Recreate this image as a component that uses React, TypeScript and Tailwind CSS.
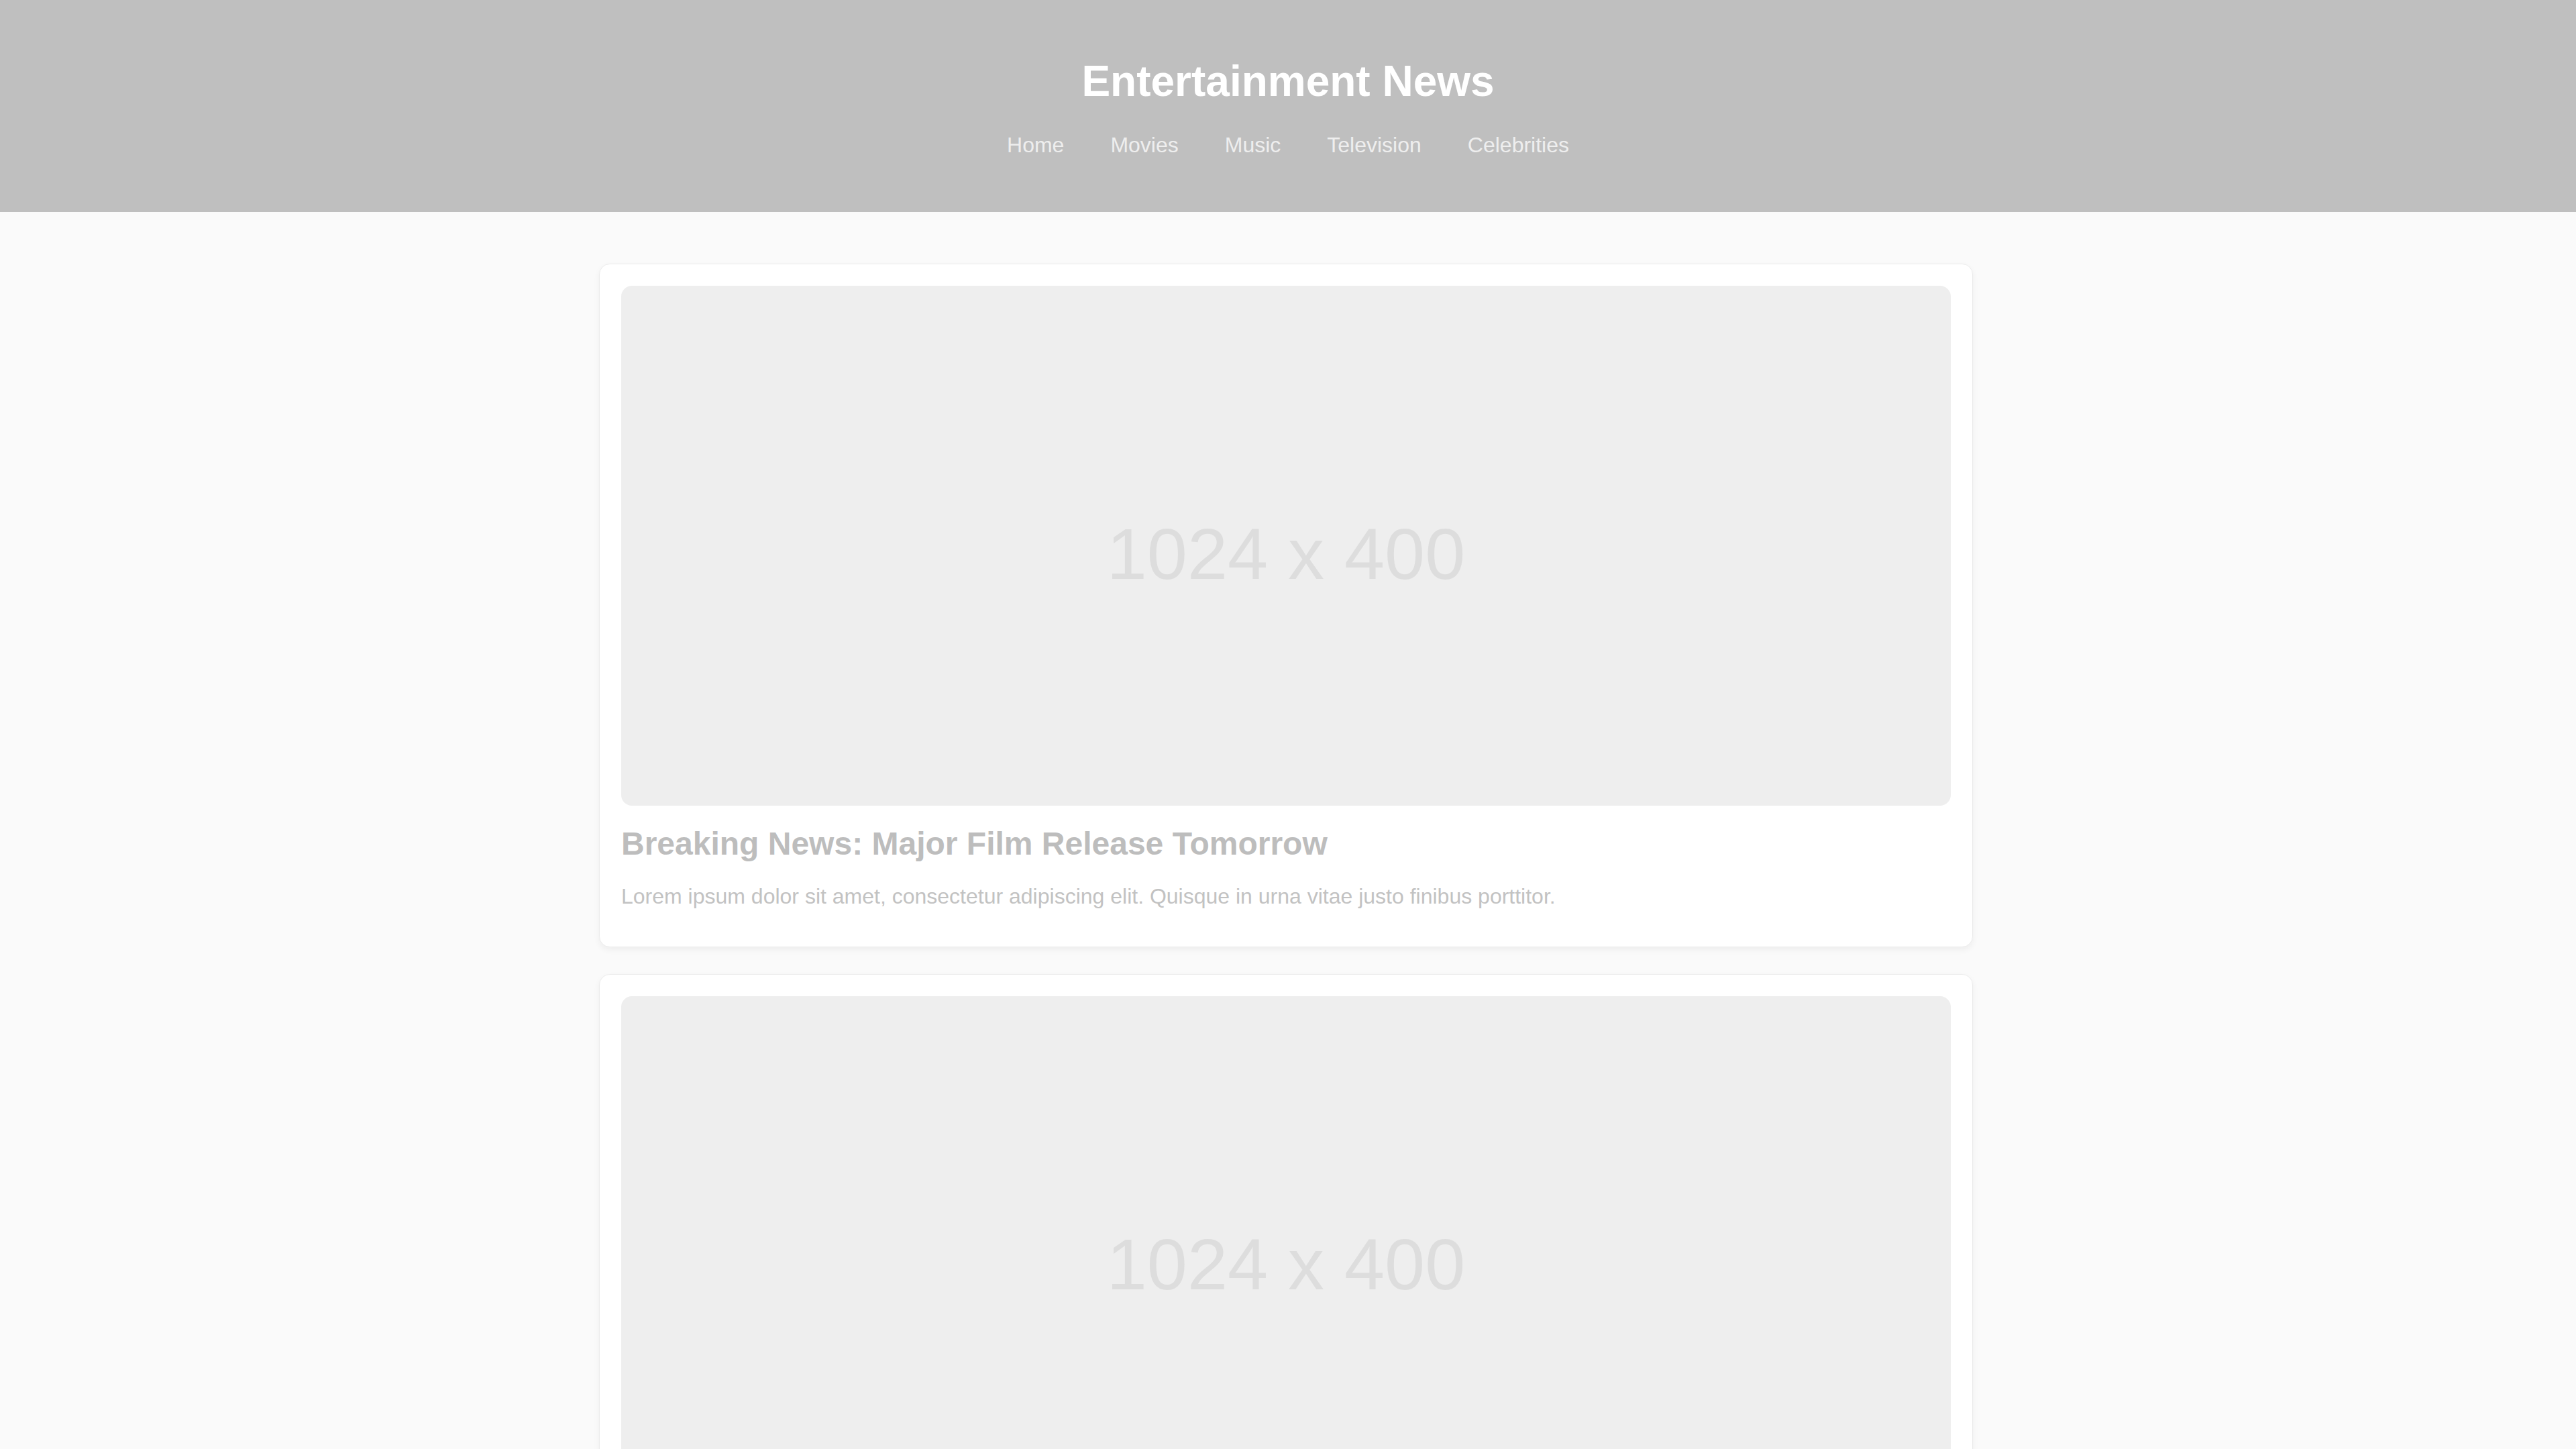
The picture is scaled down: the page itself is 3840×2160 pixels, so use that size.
import React from "react";

const navItems = ["Home", "Movies", "Music", "Television", "Celebrities"];

const articles = [
  {
    title: "Breaking News: Major Film Release Tomorrow",
    body: "Lorem ipsum dolor sit amet, consectetur adipiscing elit. Quisque in urna vitae justo finibus porttitor.",
  },
  {
    title: "Chart-Topping Album Announced",
    body: "Lorem ipsum dolor sit amet, consectetur adipiscing elit. Quisque in urna vitae justo finibus porttitor.",
  },
];

function Placeholder() {
  return (
    <div className="flex h-[775px] w-full items-center justify-center rounded-[16px] bg-[#eeeeee]">
      <span className="pt-[24px] text-[108px] leading-none text-[#dddddd]">1024 x 400</span>
    </div>
  );
}

export default function App() {
  return (
    <div
      className="min-h-screen w-full bg-[#fafafa]"
      style={{ fontFamily: '"Liberation Sans", Arial, sans-serif' }}
    >
      <header className="flex h-[316px] w-full flex-col items-center bg-[#bfbfbf] pt-[89px]">
        <h1 className="text-[64px] font-bold leading-none text-white">Entertainment News</h1>
        <nav className="mt-[47px] flex items-center gap-[69px]">
          {navItems.map((item) => (
            <a key={item} className="text-[32px] leading-none text-[#eeeeee]">
              {item}
            </a>
          ))}
        </nav>
      </header>
      <main className="flex flex-col items-center gap-[40px] pt-[77px] pb-[80px]">
        {articles.map((a, i) => (
          <article
            key={i}
            className="w-[2048px] -translate-x-[3px] rounded-[16px] border border-[#ececec] bg-white px-[32px] pt-[32px] pb-[59px] shadow-[0_4px_10px_rgba(0,0,0,0.05)]"
          >
            <Placeholder />
            <h2 className="mt-[33px] text-[48px] font-bold leading-none text-[#bdbdbd]">{a.title}</h2>
            <p className="mt-[38px] text-[32px] leading-none text-[#c2c2c2]">{a.body}</p>
          </article>
        ))}
      </main>
    </div>
  );
}
